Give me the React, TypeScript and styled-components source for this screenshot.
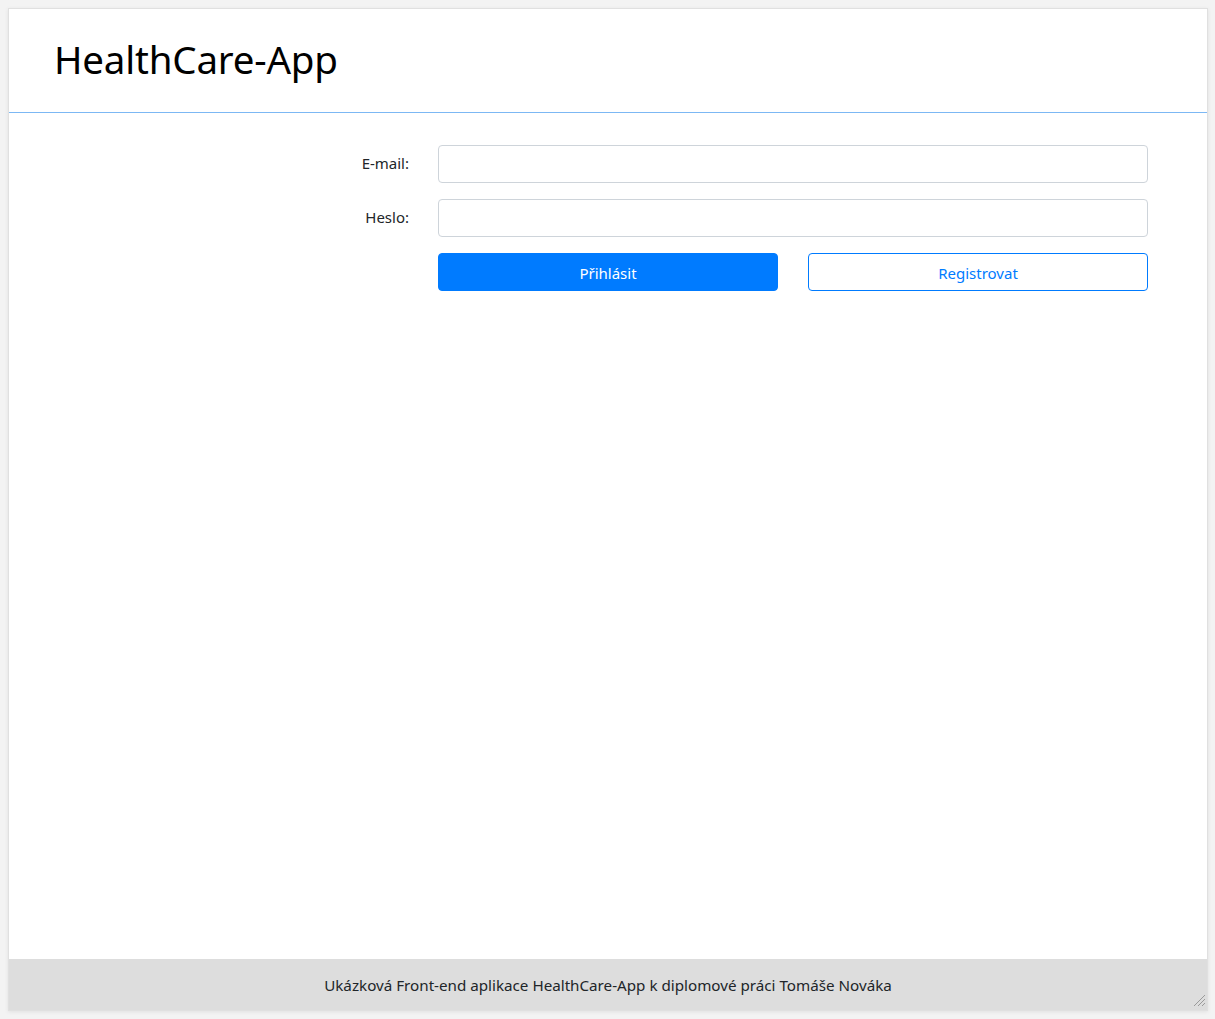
import React from "react";
import styled, { createGlobalStyle } from "styled-components";

const GlobalStyle = createGlobalStyle`
  html, body {
    margin: 0;
    padding: 0;
    background: #f3f3f3;
  }
  body {
    padding: 8px;
    font-family: "Noto Sans", "Open Sans", "Liberation Sans", sans-serif;
    color: #212529;
  }
  * { box-sizing: border-box; }
`;

const Panel = styled.div`
  position: relative;
  width: 1200px;
  height: 1003px;
  background: #fff;
  border: 1px solid #e0e0e0;
  box-shadow: 0 1px 4px rgba(0, 0, 0, 0.08);
  display: flex;
  flex-direction: column;
`;

const Header = styled.header`
  height: 104px;
  border-bottom: 1px solid #7cb8f4;
  padding: 0 0 4px 45px;
  display: flex;
  align-items: center;
`;

const Title = styled.h1`
  margin: 0;
  font-weight: 400;
  font-size: 38.5px;
  color: #000;
  letter-spacing: -0.2px;
`;

const Main = styled.main`
  flex: 1;
`;

const Form = styled.form`
  display: grid;
  grid-template-columns: 1fr 710px;
  column-gap: 29px;
  row-gap: 16px;
  padding: 32px 59px 0 0;
  align-items: center;
`;

const Label = styled.label`
  text-align: right;
  font-size: 15px;
  color: #212529;
  padding-bottom: 3px;
`;

const Input = styled.input`
  height: 38px;
  width: 100%;
  border: 1px solid #ced4da;
  border-radius: 4px;
  padding: 6px 12px;
  font-size: 16px;
  font-family: inherit;
`;

const Buttons = styled.div`
  grid-column: 2;
  display: grid;
  grid-template-columns: 1fr 1fr;
  column-gap: 30px;
`;

const Button = styled.button<{ $outline?: boolean }>`
  height: 38px;
  border-radius: 4px;
  border: 1px solid #007bff;
  background: ${(p) => (p.$outline ? "#fff" : "#007bff")};
  color: ${(p) => (p.$outline ? "#007bff" : "#fff")};
  font-family: inherit;
  font-size: 15px;
  padding-top: 2px;
  cursor: pointer;
`;

const Footer = styled.footer`
  height: 51px;
  background: #dddddd;
  display: flex;
  align-items: center;
  justify-content: center;
  font-size: 15.2px;
  color: #212529;
`;

const Grip = styled.svg`
  position: absolute;
  right: 1px;
  bottom: 3px;
`;

export default function App() {
  return (
    <>
      <GlobalStyle />
      <Panel>
        <Header>
          <Title>HealthCare-App</Title>
        </Header>
        <Main>
          <Form onSubmit={(e) => e.preventDefault()}>
            <Label htmlFor="email">E-mail:</Label>
            <Input id="email" type="email" />
            <Label htmlFor="pass">Heslo:</Label>
            <Input id="pass" type="password" />
            <Buttons>
              <Button type="submit">Přihlásit</Button>
              <Button type="button" $outline>
                Registrovat
              </Button>
            </Buttons>
          </Form>
        </Main>
        <Footer>
          Ukázková Front-end aplikace HealthCare-App k diplomové práci Tomáše Nováka
        </Footer>
        <Grip width="13" height="13" viewBox="0 0 13 13">
          <path d="M12 1 L1 12 M12 5 L5 12 M12 9 L9 12" stroke="#9a9a9a" strokeWidth="1" fill="none" />
        </Grip>
      </Panel>
    </>
  );
}
